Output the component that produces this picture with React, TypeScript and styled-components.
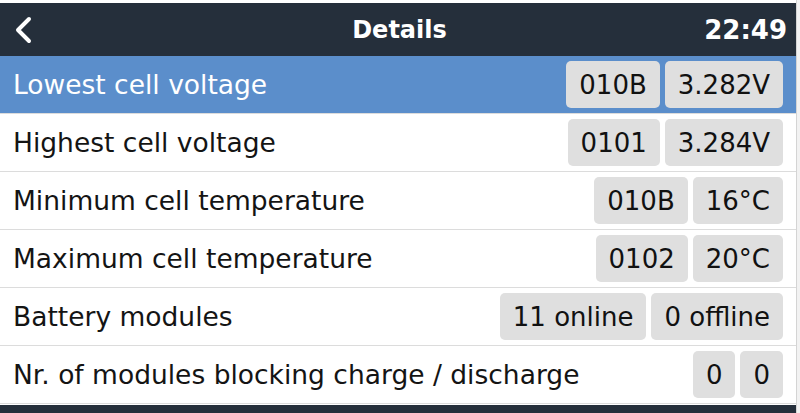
import React from "react";
import styled, { createGlobalStyle } from "styled-components";

const Global = createGlobalStyle`
  html, body { margin: 0; padding: 0; background: #f2f2f2; }
  body { font-family: "DejaVu Sans", "Liberation Sans", sans-serif; }
`;

const Screen = styled.div`
  width: 797px;
  height: 413px;
  padding-top: 3px;
  box-sizing: border-box;
  display: flex;
  flex-direction: column;
  background: #ffffff;
  border-right: 1px solid #d4d4d4;
  overflow: hidden;
`;

const Header = styled.div`
  height: 53px;
  flex: none;
  background: #252f3b;
  color: #ffffff;
  display: grid;
  grid-template-columns: 1fr auto 1fr;
  align-items: center;
  padding: 0 9px 0 12px;
`;

const Back = styled.div`
  display: flex;
  align-items: center;
`;

const Title = styled.div`
  font-weight: bold;
  font-size: 24px;
`;

const Clock = styled.div`
  justify-self: end;
  font-weight: bold;
  font-size: 26px;
`;

const List = styled.div`
  flex: none;
  display: flex;
  flex-direction: column;
`;

const Row = styled.div<{ $selected?: boolean }>`
  height: 58px;
  flex: none;
  box-sizing: border-box;
  display: flex;
  align-items: center;
  justify-content: space-between;
  padding: 0 13px 0 13px;
  border-bottom: 1px solid #dcdcdc;
  background: ${(p) => (p.$selected ? "#5b8ecb" : "#ffffff")};
  color: ${(p) => (p.$selected ? "#ffffff" : "#141414")};
`;

const Label = styled.div`
  font-size: 26.5px;
`;

const Values = styled.div`
  display: flex;
  gap: 5px;
`;

const Value = styled.div`
  height: 47px;
  box-sizing: border-box;
  display: flex;
  align-items: center;
  padding: 0 13px;
  background: #dfdfdf;
  border-radius: 5px;
  color: #111111;
  font-size: 26px;
`;

const Footer = styled.div`
  flex: 1;
  background: #252f3b;
  margin-top: 1px;
`;

const rows: { label: string; values: string[]; selected?: boolean }[] = [
  { label: "Lowest cell voltage", values: ["010B", "3.282V"], selected: true },
  { label: "Highest cell voltage", values: ["0101", "3.284V"] },
  { label: "Minimum cell temperature", values: ["010B", "16°C"] },
  { label: "Maximum cell temperature", values: ["0102", "20°C"] },
  { label: "Battery modules", values: ["11 online", "0 offline"] },
  { label: "Nr. of modules blocking charge / discharge", values: ["0", "0"] },
];

export default function App() {
  return (
    <>
      <Global />
      <Screen>
        <Header>
          <Back>
            <svg width="24" height="30" viewBox="0 0 24 30">
              <path d="M17 4 L6 15 L17 26" fill="none" stroke="#ffffff" strokeWidth="4" strokeLinecap="round" strokeLinejoin="round" />
            </svg>
          </Back>
          <Title>Details</Title>
          <Clock>22:49</Clock>
        </Header>
        <List>
          {rows.map((r) => (
            <Row key={r.label} $selected={r.selected}>
              <Label>{r.label}</Label>
              <Values>
                {r.values.map((v, i) => (
                  <Value key={i}>{v}</Value>
                ))}
              </Values>
            </Row>
          ))}
        </List>
        <Footer />
      </Screen>
    </>
  );
}
